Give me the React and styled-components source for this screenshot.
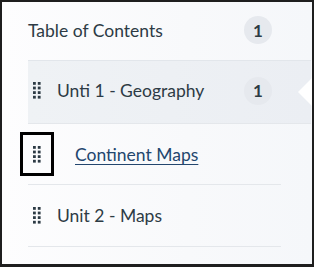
import React from 'react'
import styled, { createGlobalStyle } from 'styled-components'

const Global = createGlobalStyle`
  html, body {
    margin: 0;
    padding: 0;
    background: #ffffff;
  }
  * {
    box-sizing: border-box;
  }
`

const Frame = styled.div`
  width: 314px;
  height: 267px;
  border: 2px solid #1e1e1e;
  border-bottom-width: 3px;
  background: linear-gradient(to right, #fdfdfe 0%, #f8f9fb 60%, #f5f7fa 100%);
  font-family: Lato, "Noto Sans", "Liberation Sans", sans-serif;
  color: #2d3b45;
  overflow: hidden;
`

const Panel = styled.div`
  padding-left: 26px;
  padding-right: 1px;
`

const Header = styled.div`
  height: 59px;
  display: flex;
  align-items: center;
  justify-content: space-between;
  padding-right: 39px;
  padding-bottom: 2px;
  border-bottom: 1px solid #e2e6eb;
  font-size: 17.5px;
`

const Badge = styled.span`
  width: 28px;
  height: 28px;
  border-radius: 50%;
  background: #e6e9ee;
  display: flex;
  align-items: center;
  justify-content: center;
  font-weight: 700;
  font-size: 17px;
  color: #2d3b45;
`

const Row = styled.div`
  position: relative;
  height: ${p => p.$h}px;
  display: flex;
  align-items: center;
  margin-right: ${p => (p.$nested ? 30 : 0)}px;
  padding-right: 39px;
  padding-bottom: ${p => (p.$active ? 3 : 0)}px;
  border-bottom: 1px solid #e4e7eb;
  background: ${p => (p.$active ? 'linear-gradient(to right, #eff2f5, #ebeef3)' : 'transparent')};
  font-size: 17.5px;

  ${p => p.$active && `
    &::after {
      content: '';
      position: absolute;
      right: -1px;
      top: 50%;
      transform: translateY(-50%);
      border-top: 14px solid transparent;
      border-bottom: 14px solid transparent;
      border-right: 14px solid #ffffff;
    }
  `}
`

const Handle = styled.span`
  width: ${p => (p.$focused ? 34 : 14)}px;
  height: ${p => (p.$focused ? 44 : 20)}px;
  margin-left: ${p => (p.$focused ? -8 : 2)}px;
  margin-right: ${p => (p.$focused ? 21 : 13)}px;
  border: ${p => (p.$focused ? '3px solid #000' : 'none')};
  display: flex;
  align-items: center;
  justify-content: center;
  flex-shrink: 0;
`

const Label = styled.span`
  flex: 1;
`

const Link = styled.a`
  color: #23466e;
  text-decoration: underline;
  text-underline-offset: 3px;
  text-decoration-thickness: 1px;
  font-size: 17.5px;
`

const Grip = () => (
  <svg width="8" height="17" viewBox="0 0 8 17">
    {[0, 4.6, 9.2, 13.8].map(y => (
      <g key={y} fill="#2d3b45">
        <rect x="0" y={y} width="2.8" height="2.8" />
        <rect x="4.8" y={y} width="2.8" height="2.8" />
      </g>
    ))}
  </svg>
)

export default function App() {
  return (
    <>
      <Global />
      <Frame>
        <Panel>
          <Header>
            <span>Table of Contents</span>
            <Badge>1</Badge>
          </Header>
          <Row $h={63} $active>
            <Handle><Grip /></Handle>
            <Label>Unti 1 - Geography</Label>
            <Badge>1</Badge>
          </Row>
          <Row $h={61} $nested>
            <Handle $focused><Grip /></Handle>
            <Link href="#">Continent Maps</Link>
          </Row>
          <Row $h={62} $nested>
            <Handle><Grip /></Handle>
            <Label>Unit 2 - Maps</Label>
          </Row>
        </Panel>
      </Frame>
    </>
  )
}
